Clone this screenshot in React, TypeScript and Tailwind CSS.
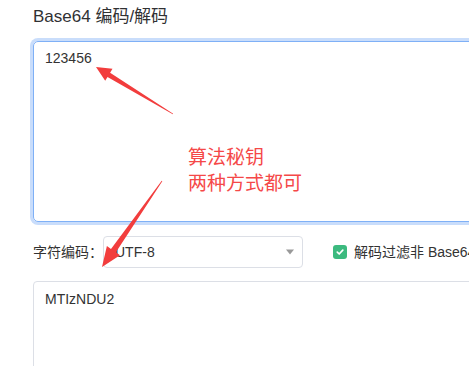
import React from "react";

type Pt = [number, number];

// builds the polygon of a screenshot-style annotation arrow (thin tail, wide head)
function arrowPoints(tail: Pt, tip: Pt, head: number, headW: number, shaftW: number) {
  const dx = tip[0] - tail[0];
  const dy = tip[1] - tail[1];
  const len = Math.sqrt(dx * dx + dy * dy);
  const ux = dx / len;
  const uy = dy / len;
  const nx = -uy;
  const ny = ux;
  const bx = tip[0] - ux * head;
  const by = tip[1] - uy * head;
  const pts: Pt[] = [
    [tail[0] + nx * 0.4, tail[1] + ny * 0.4],
    [bx + nx * (shaftW / 2), by + ny * (shaftW / 2)],
    [bx + nx * (headW / 2), by + ny * (headW / 2)],
    tip,
    [bx - nx * (headW / 2), by - ny * (headW / 2)],
    [bx - nx * (shaftW / 2), by - ny * (shaftW / 2)],
    [tail[0] - nx * 0.4, tail[1] - ny * 0.4],
  ];
  return pts.map((p) => `${p[0].toFixed(1)},${p[1].toFixed(1)}`).join(" ");
}

function Annotations() {
  return (
    <div className="absolute inset-0 pointer-events-none">
      <svg width="469" height="366" className="absolute left-0 top-0">
        <polygon points={arrowPoints([173, 114], [96, 67], 15, 14, 5)} fill="#f23d3d" />
        <polygon points={arrowPoints([162, 181], [102, 267], 20, 16, 6)} fill="#f23d3d" />
      </svg>
      <div className="absolute left-[188px] top-[143px] text-[19px] leading-[26px] text-[#f54848] font-['Noto_Sans_CJK_SC',sans-serif]">
        <div>算法秘钥</div>
        <div>两种方式都可</div>
      </div>
    </div>
  );
}

export default function App() {
  return (
    <div className="relative w-[469px] h-[366px] overflow-hidden bg-white text-[#333] font-['Liberation_Sans','Noto_Sans_CJK_SC',sans-serif]">
      <div className="pl-[33px] pt-[5px] w-[560px]">
        <h1 className="text-[17px] leading-[24px] text-[#303133]">Base64 编码/解码</h1>

        <div className="mt-[12px] h-[181px] rounded-[5px] border border-[#7fb0f6] ring-3 ring-[#c9ddfb] px-[11px] py-[6px] text-[14px] leading-[20px]">
          123456
        </div>

        <div className="mt-[14px] flex items-center h-[32px]">
          <span className="w-[70px] text-[14px] text-[#333]">字符编码：</span>
          <div className="flex items-center justify-between w-[200px] h-[32px] rounded-[4px] border border-[#dcdfe6] pl-[11px] pr-[7px] text-[14px]">
            <span>UTF-8</span>
            <svg width="10" height="6" viewBox="0 0 10 6">
              <path d="M1 0.5 L9 0.5 L5 5.5 Z" fill="#999" />
            </svg>
          </div>
          <div className="ml-[30px] flex items-center gap-[7px] whitespace-nowrap">
            <span className="w-[14px] h-[14px] rounded-[3px] bg-[#3cba7f] flex items-center justify-center">
              <svg width="10" height="10" viewBox="0 0 10 10">
                <path d="M2.3 5.2 L4.2 7 L7.8 3.2" stroke="#fff" strokeWidth="1.7" fill="none" strokeLinecap="round" strokeLinejoin="round" />
              </svg>
            </span>
            <span className="text-[14px]">解码过滤非 Base64 字符</span>
          </div>
        </div>

        <div className="mt-[13px] h-[140px] rounded-[4px] border border-[#dcdfe6] px-[11px] py-[7px] text-[14px] leading-[20px]">
          MTIzNDU2
        </div>
      </div>
      <Annotations />
    </div>
  );
}
